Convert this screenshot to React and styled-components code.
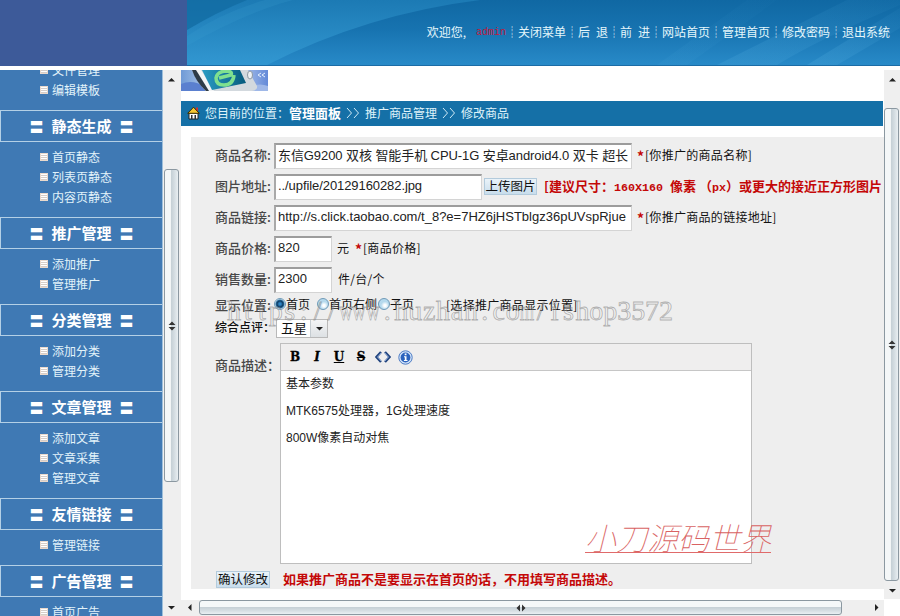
import React, { useState } from 'react';
import styled, { createGlobalStyle, css } from 'styled-components';

const colors = {
	logo: '#3d5a99',
	menu: '#3f79b4',
	menuLine: '#b4d0e6',
	bar: '#1570a7',
	panel: '#eeeeee',
	track: '#efefef',
	red: '#c40808'
};

const cjk = `'Noto Sans CJK SC', sans-serif`;

const GlobalStyle = createGlobalStyle`
	body {
		margin: 0;
		background: #fff;
		overflow: hidden;
		font: 12px/20px ${cjk};
	}
	* {
		box-sizing: border-box;
	}
`;

const Page = styled.div`
	position: relative;
	width: 900px;
	height: 616px;
	overflow: hidden;
	display: flex;
	flex-direction: column;
	gap: 4px;
`;

const Header = styled.header`
	display: flex;
	height: 66px;
	flex: none;
	background: ${colors.logo};
`;

const Logo = styled.div`
	width: 187px;
`;

const Banner = styled.div`
	position: relative;
	flex: 1;
	border-bottom: 1px solid #1b6ca6;
`;

const BannerArt = styled.svg`
	position: absolute;
	inset: 0;
	display: block;
`;

const Nav = styled.nav`
	position: relative;
	display: flex;
	justify-content: flex-end;
	padding: 22px 10px 0 0;
	color: #e4f6fb;
	white-space: pre;
`;

const NavLink = styled.span`
	width: ${({ width }) => width || 48}px;
	display: flex;
	justify-content: space-between;
`;

const NavDivider = styled.span`
	width: 12px;
	text-align: center;
`;

const User = styled.span`
	width: 30px;
	margin: 1px 0 0 10px;
	font-family: 'Liberation Mono', monospace;
	font-size: 10px;
	color: #c2183a;
`;

const Body = styled.div`
	display: flex;
	flex: 1;
	min-height: 0;
`;

const Sidebar = styled.aside`
	width: 163px;
	overflow: hidden;
	background: ${colors.menu};
	border-right: 1px solid #9dbfdb;
	color: #e2f3fa;
`;

const MenuTitle = styled.div`
	display: flex;
	justify-content: center;
	align-items: center;
	gap: 8px;
	height: 32px;
	padding-bottom: 1px;
	border: 1px solid ${colors.menuLine};
	border-right: 0;
	font-size: 15px;
	font-weight: bold;
	color: #fff;
`;

const Geta = styled.span`
	font-size: 14px;
	font-weight: normal;
`;

const MenuList = styled.ul`
	list-style: none;
	margin: 0;
	padding: 5px 0 10px 40px;
	${({ scrolled }) => (scrolled ? 'margin-top: -15px;' : null)};
`;

const MenuItem = styled.li`
	display: flex;
	align-items: center;
	gap: 4px;
	height: 20px;
	line-height: 18px;
	padding-bottom: 1px;
`;

const Bullet = styled.i`
	width: 8px;
	height: 8px;
	margin-top: 1px;
	border: 1px solid #e9d9cd;
	background: repeating-linear-gradient(#fff 0 1px, #d5cdc8 1px 2px);
`;

const Track = styled.div`
	display: flex;
	flex: none;
	flex-direction: ${({ horizontal }) => (horizontal ? 'row' : 'column')};
	${({ horizontal }) => (horizontal ? 'height: 16px' : null)};
	${({ width }) => (width ? `width: ${width}px` : null)};
	${({ length }) => (length ? `height: ${length}px` : null)};
	background: ${colors.track};
`;

const ArrowBox = styled.span`
	display: flex;
	align-items: center;
	justify-content: center;
	flex: none;
	width: 16px;
	height: 18px;
	${({ flat }) => (flat ? 'height: 15px' : null)};
`;

const Thumb = styled.div`
	display: flex;
	align-items: center;
	justify-content: center;
	flex: none;
	border: 1px solid #8b98a1;
	border-radius: 3px;
	${({ horizontal, offset, size }) =>
		horizontal
			? css`
					width: ${size}px;
					height: 15px;
					margin-left: ${offset}px;
					background: linear-gradient(#f5f8f9 0 45%, #c7d1d7 50%, #d6dee3 75%, #e9eff2);
			  `
			: css`
					width: 15px;
					height: ${size}px;
					margin: ${offset}px 0 0 ${horizontal === false ? 0 : 1}px;
					background: linear-gradient(90deg, #f4f7f8 0 42%, #c5d0d6 48%, #d4dde2 72%, #e9eff2);
			  `};
`;

const Spring = styled.span`
	flex: 1;
`;

const Main = styled.main`
	width: 703px;
	display: flex;
	flex-direction: column;
`;

const Picture = styled.svg`
	display: block;
	flex: none;
`;

const Crumbs = styled.div`
	display: flex;
	align-items: center;
	flex: none;
	height: 25px;
	margin: 10px 1px 11px 0;
	padding: 0 0 2px 6px;
	background: ${colors.bar};
	color: #dff3fa;
	white-space: nowrap;

	svg {
		margin-right: 5px;
	}
	b {
		font-size: 13px;
		color: #fff;
	}
`;

const CrumbArrow = styled.span`
	width: 24px;
	display: flex;
	justify-content: center;
	svg {
		margin: 0;
	}
`;

const Panel = styled.form`
	height: 452px;
	flex: none;
	margin: 0 0 11px 10px;
	padding: 3px 0 0 24px;
	background: ${colors.panel};
	color: #111;
`;

const Row = styled.div`
	display: flex;
	align-items: ${({ top }) => (top ? 'flex-start' : 'center')};
	height: ${({ height }) => height || 31}px;
	white-space: nowrap;
`;

const Label = styled.label`
	width: 59px;
	padding-bottom: 2px;
	font-size: ${({ small }) => (small ? 12 : 13)}px;
	font-weight: 500;
	color: ${({ small }) => (small ? '#111' : '#484848')};
`;

const Input = styled.input`
	width: ${({ width }) => width}px;
	height: 26px;
	padding: 0 0 3px 2px;
	border: 1px solid #d4d4d4;
	border-top: 2px solid #9c9c9c;
	border-left: 2px solid #a9a9a9;
	background: #fff;
	outline: none;
	border-radius: 0;
	color: #222;
	font: 13px 'Liberation Sans', ${cjk};
	letter-spacing: ${({ spacing }) => spacing || 0}px;
`;

const Hint = styled.span`
	margin-left: ${({ gap }) => gap || 0}px;
	padding-bottom: 1px;
	letter-spacing: ${({ spacing }) => spacing || 0}px;
`;

const Star = styled.b`
	display: inline-block;
	width: 8px;
	font-size: 14px;
	line-height: 16px;
	vertical-align: -2px;
	color: ${colors.red};
`;

const Warning = styled.b`
	margin-left: ${({ gap }) => gap}px;
	padding-bottom: 1px;
	font-size: 13px;
	color: ${colors.red};
	letter-spacing: ${({ spacing }) => spacing || 0}px;
`;

const Mono = styled.span`
	font: bold 11.7px 'Liberation Mono', monospace;
`;

const Button = styled.button`
	width: ${({ width }) => width}px;
	height: 17px;
	padding: 0;
	border: 1px solid #b3cbdc;
	background: linear-gradient(#eaf3f9, #c8ddec);
	font: ${({ size }) => size}px/14px ${cjk};
	color: #111;
	white-space: nowrap;
`;

const Option = styled.span`
	display: flex;
	align-items: center;
	padding-bottom: 3px;
	width: ${({ width }) => width}px;
`;

const Radio = styled.i`
	flex: none;
	width: 12px;
	height: 12px;
	border: 1px solid #6f9ab8;
	border-radius: 50%;
	background: ${({ checked }) =>
		checked
			? 'radial-gradient(circle, #2f86c4 0 1px, #0d3b62 3px, #2b6f9f 4px, #d6edf8 5px)'
			: 'radial-gradient(circle at 60% 65%, #fff 0 1px, #b5d9ed 4px)'};
`;

const Select = styled.div`
	display: flex;
	width: 52px;
	height: 19px;
	margin-left: 2px;
	padding-left: 4px;
	border: 1px solid #b9b9b9;
	background: #fff;
	font-size: 13px;
	line-height: 15px;
	justify-content: space-between;
`;

const SelectButton = styled.span`
	display: flex;
	align-items: center;
	justify-content: center;
	width: 17px;
	border-left: 1px solid #c5ccd1;
	background: linear-gradient(#f4f5f6, #dde1e4);
`;

const Editor = styled.div`
	width: 472px;
	height: 221px;
	margin: 3px 0 0 6px;
	border: 1px solid #bebebe;
	background: #fff;
`;

const Toolbar = styled.div`
	display: flex;
	align-items: center;
	height: 27px;
	padding-left: 3px;
	border-bottom: 1px solid #c6c6c6;
	background: #efeeee;
`;

const Tool = styled.span`
	width: 22px;
	height: 16px;
	display: flex;
	align-items: center;
	justify-content: center;
	font: 900 12px/16px 'DejaVu Serif', serif;
	color: #000;
	-webkit-text-stroke: 0.3px #000;
	font-style: ${({ italic }) => (italic ? 'italic' : 'normal')};
	text-decoration: ${({ line }) => line || 'none'};
`;

const Paragraph = styled.p`
	margin: 0 0 6.8px;
	padding-left: 5px;
	font: 12px/20px 'Liberation Sans', ${cjk};
	color: #222;
	&:first-of-type {
		margin-top: 3px;
	}
`;

const UrlMark = styled.div`
	position: absolute;
	left: 227px;
	top: 295px;
	display: flex;
	font: 28px/32px 'Liberation Serif', serif;
	color: rgba(255, 255, 255, 0.15);
	-webkit-text-stroke: 0.8px rgba(130, 130, 130, 0.6);
	pointer-events: none;
`;

const UrlLetter = styled.span`
	display: flex;
	justify-content: center;
	width: 13.94px;
	transform: scaleX(${({ wide }) => (wide ? 0.66 : 1)});
`;

const NameMark = styled.div`
	position: absolute;
	left: 585px;
	top: 518px;
	height: 35px;
	border-bottom: 1px solid #e06a6a;
	font: italic 100 31px/37px ${cjk};
	color: #d96363;
	white-space: nowrap;
	pointer-events: none;
`;

const arrowPaths = {
	up: 'M0 5.5 3.5 2 7 5.5Z',
	down: 'M0 2 3.5 5.5 7 2Z',
	left: 'M5.5 0 2 3.5 5.5 7Z',
	right: 'M2 0 5.5 3.5 2 7Z'
};

const Arrow = ({ to }) => (
	<svg width="7" height="7">
		<path d={arrowPaths[to]} fill="#222" />
	</svg>
);

const GripIcon = styled.svg`
	flex: none;
	transform: rotate(${({ $turned }) => ($turned ? 90 : 0)}deg);
`;

const Grip = ({ horizontal }) => (
	<GripIcon width="10" height="10" $turned={horizontal}>
		<path d="M1.5 4 5 0.5 8.5 4Z M1.5 6 5 9.5 8.5 6Z" fill="#333" />
	</GripIcon>
);

const HomeIcon = () => (
	<svg width="13" height="14" viewBox="0 0 13 14">
		<path d="M2 7h9v6H2z" fill="#fff" stroke="#222" />
		<path d="M9 1.5h2V5H9z" fill="#c33" />
		<path d="M.7 7.3 6.5 1.2l5.8 6.1Z" fill="#f5c631" stroke="#3a2c00" />
		<path d="M4 9h1.5v4H4zM7.5 9h1.5v4H7.5z" fill="#333" />
	</svg>
);

const CodeIcon = () => (
	<svg width="16" height="12" fill="none">
		<path d="M6 1 1.5 6 6 11M10 1l4.5 5L10 11" stroke="#23457f" strokeWidth="2.4" />
		<path d="M6 2 2.5 6 6 10M10 2l3.5 4L10 10" stroke="#9db9e6" strokeWidth=".8" />
	</svg>
);

const InfoIcon = () => (
	<svg width="15" height="15">
		<circle cx="7.5" cy="7.5" r="6.7" fill="#d5e5fa" stroke="#4d7cc4" />
		<circle cx="7.5" cy="7.5" r="4.9" fill="#2b63bd" />
		<path d="M6.7 3.6h1.8v1.6H6.7zM6 6.3h2.5v3.8h1v1H5.9v-1h.9V7.2H6z" fill="#fff" />
	</svg>
);

const Chevrons = () => (
	<svg width="14" height="10" fill="none" stroke="#cfeaf6">
		<path d="m1 0 4.5 5L1 10M8 0l4.5 5L8 10" />
	</svg>
);

const PhonePicture = () => (
	<Picture width="87" height="21" viewBox="0 0 87 21">
		<defs>
			<linearGradient id="sky" x1="0" x2="1">
				<stop offset="0" stopColor="#6f9ad6" />
				<stop offset=".5" stopColor="#dce8f6" />
				<stop offset="1" stopColor="#648ad8" />
			</linearGradient>
			<linearGradient id="screen" x1="0" x2="1">
				<stop offset="0" stopColor="#2a9cc4" />
				<stop offset="1" stopColor="#075b7d" />
			</linearGradient>
		</defs>
		<path d="M0 0h87v21H0z" fill="url(#sky)" />
		<path d="M0 14q12-5 24 3v4H0z" fill="#5b80cf" />
		<path d="M71 16q8-3 16 0v5H70z" fill="#9fb8e8" />
		<path d="M11 0h56l9 16q1 4-5 5H25Q17 14 11 0Z" fill="#d3d9de" />
		<path d="M11 0h5l14 21h-5Q15 12 11 0Z" fill="#2f3c48" />
		<path d="M15 0h5l13 21h-5Z" fill="#f3f5f6" />
		<path d="M21 0h38l6 13-34 7Z" fill="url(#screen)" />
		<path
			d="M53 5q-1 10-10 10-8 0-8-7 1-6 9-7 8 0 6 4l-12 3"
			fill="none"
			stroke="#7fe08f"
			strokeWidth="3.5"
		/>
		<ellipse cx="69" cy="5" rx="2.5" ry="4" fill="#eef1f3" stroke="#8d98a2" />
		<path d="m80 3-3 2 3 2m4-4-3 2 3 2" fill="none" stroke="#e5f0ff" />
	</Picture>
);

const BannerBackground = () => (
	<BannerArt width="713" height="65" viewBox="0 0 713 65">
		<defs>
			<linearGradient id="base" x1="0" y1="0" x2="0" y2="1">
				<stop offset="0" stopColor="#1068a3" />
				<stop offset=".45" stopColor="#1773b0" />
				<stop offset="1" stopColor="#288ac8" />
			</linearGradient>
			<linearGradient id="sweep" x1="0" y1="0" x2="0" y2="1">
				<stop offset="0" stopColor="#1c7ab4" />
				<stop offset="1" stopColor="#3297d1" />
			</linearGradient>
			<linearGradient id="ray" x1="1" y1="0" x2="0" y2="1">
				<stop offset="0" stopColor="#4aa6da" stopOpacity=".1" />
				<stop offset="1" stopColor="#4aa6da" stopOpacity=".55" />
			</linearGradient>
		</defs>
		<path d="M0 0h713v65H0z" fill="url(#base)" />
		<path d="M0 0h293Q180 14 80 65H0z" fill="url(#sweep)" />
		<path d="M0 0h60Q30 12 0 30z" fill="#116ba2" opacity=".75" />
		<path d="M0 46Q60 12 106 0H78Q35 12 0 36z" fill="#3d9fd2" opacity=".2" />
		<path d="M470 65 560 0h30L500 65z" fill="url(#ray)" opacity=".2" />
		<path d="M530 65Q610 25 660 0h53v5Q630 40 590 65z" fill="url(#ray)" opacity=".5" />
		<path d="M620 65 713 8v20L650 65z" fill="url(#ray)" opacity=".6" />
	</BannerArt>
);

const links = ['关闭菜单', '后 退', '前 进', '网站首页', '管理首页', '修改密码', '退出系统'];

const menu = [
	{ items: ['文件管理', '编辑模板'] },
	{ title: '静态生成', items: ['首页静态', '列表页静态', '内容页静态'] },
	{ title: '推广管理', items: ['添加推广', '管理推广'] },
	{ title: '分类管理', items: ['添加分类', '管理分类'] },
	{ title: '文章管理', items: ['添加文章', '文章采集', '管理文章'] },
	{ title: '友情链接', items: ['管理链接'] },
	{ title: '广告管理', items: ['首页广告'] }
];

const positions = [
	{ name: '首页', width: 43 },
	{ name: '首页右侧', width: 61 },
	{ name: '子页', width: 68 }
];

const siteUrl = 'https://www.huzhan.com/ishop3572';

const App = () => {
	const [position, setPosition] = useState('首页');

	return (
		<Page>
			<GlobalStyle />
			<Header>
				<Logo />
				<Banner>
					<BannerBackground />
					<Nav>
						<span>欢迎您,</span>
						<User>admin</User>
						{links.map((link, index) => (
							<React.Fragment key={link}>
								<NavDivider>┊</NavDivider>
								<NavLink width={index === 1 || index === 2 ? 30 : 48}>
									{link.includes(' ')
										? link.split(' ').map(part => <span key={part}>{part}</span>)
										: link}
								</NavLink>
							</React.Fragment>
						))}
					</Nav>
				</Banner>
			</Header>
			<Body>
				<Sidebar>
					{menu.map(({ title, items }) => (
						<React.Fragment key={items[0]}>
							{title && (
								<MenuTitle>
									<Geta>〓</Geta>
									<span>{title}</span>
									<Geta>〓</Geta>
								</MenuTitle>
							)}
							<MenuList scrolled={!title}>
								{items.map(item => (
									<MenuItem key={item}>
										<Bullet />
										{item}
									</MenuItem>
								))}
							</MenuList>
						</React.Fragment>
					))}
				</Sidebar>
				<Track width={18}>
					<ArrowBox>
						<Arrow to="up" />
					</ArrowBox>
					<Thumb offset={81} size={313}>
						<Grip />
					</Thumb>
					<Spring />
					<ArrowBox>
						<Arrow to="down" />
					</ArrowBox>
				</Track>
				<Main>
					<PhonePicture />
					<Crumbs>
						<HomeIcon />
						您目前的位置：<b>管理面板</b>
						<CrumbArrow>
							<Chevrons />
						</CrumbArrow>
						推广商品管理
						<CrumbArrow>
							<Chevrons />
						</CrumbArrow>
						修改商品
					</Crumbs>
					<Panel>
						<Row>
							<Label>商品名称:</Label>
							<Input
								width={358}
								spacing={-0.08}
								defaultValue="东信G9200 双核 智能手机 CPU-1G 安卓android4.0 双卡 超长"
							/>
							<Hint gap={5} spacing={0.3}>
								<Star>*</Star>[你推广的商品名称]
							</Hint>
						</Row>
						<Row>
							<Label>图片地址:</Label>
							<Input width={208} spacing={-0.08} defaultValue="../upfile/20129160282.jpg" />
							<Hint gap={2}>
								<Button type="button" width={53} size={12.5}>
									上传图片
								</Button>
							</Hint>
							<Warning gap={7}>
								[建议尺寸：<Mono>160X160 </Mono>像素 （<Mono>px</Mono>）或更大的接近正方形图片
							</Warning>
						</Row>
						<Row>
							<Label>商品链接:</Label>
							<Input
								width={358}
								defaultValue="http://s.click.taobao.com/t_8?e=7HZ6jHSTblgz36pUVspRjue"
							/>
							<Hint gap={5} spacing={0.3}>
								<Star>*</Star>[你推广商品的链接地址]
							</Hint>
						</Row>
						<Row>
							<Label>商品价格:</Label>
							<Input width={58} defaultValue="820" />
							<Hint gap={5}>元</Hint>
							<Hint gap={6} spacing={0.3}>
								<Star>*</Star>[商品价格]
							</Hint>
						</Row>
						<Row>
							<Label>销售数量:</Label>
							<Input width={58} defaultValue="2300" />
							<Hint gap={6} spacing={0.3}>
								件/台/个
							</Hint>
						</Row>
						<Row height={21}>
							<Label>显示位置:</Label>
							{positions.map(({ name, width }) => (
								<Option key={name} width={width} onClick={() => setPosition(name)}>
									<Radio checked={position === name} />
									{name}
								</Option>
							))}
							<Hint spacing={0.3}>[选择推广商品显示位置]</Hint>
						</Row>
						<Row height={24}>
							<Label small>综合点评：</Label>
							<Select>
								五星
								<SelectButton>
									<Arrow to="down" />
								</SelectButton>
							</Select>
						</Row>
						<Row height={231} top>
							<Label style={{ marginTop: 15 }}>商品描述：</Label>
							<Editor>
								<Toolbar>
									<Tool>B</Tool>
									<Tool italic>I</Tool>
									<Tool line="underline">U</Tool>
									<Tool line="line-through">S</Tool>
									<Tool>
										<CodeIcon />
									</Tool>
									<Tool>
										<InfoIcon />
									</Tool>
								</Toolbar>
								<Paragraph>基本参数</Paragraph>
								<Paragraph>MTK6575处理器，1G处理速度</Paragraph>
								<Paragraph>800W像素自动对焦</Paragraph>
							</Editor>
						</Row>
						<Row height={17}>
							<Hint gap={1}>
								<Button type="button" width={54} size={12.5}>
									确认修改
								</Button>
							</Hint>
							<Warning gap={13}>如果推广商品不是要显示在首页的话，不用填写商品描述。</Warning>
						</Row>
					</Panel>
					<Track horizontal>
						<ArrowBox flat>
							<Arrow to="left" />
						</ArrowBox>
						<Thumb horizontal offset={2} size={643}>
							<Grip horizontal />
						</Thumb>
						<Spring />
						<ArrowBox flat>
							<Arrow to="right" />
						</ArrowBox>
					</Track>
				</Main>
				<Track width={16} length={529}>
					<ArrowBox>
						<Arrow to="up" />
					</ArrowBox>
					<Thumb horizontal={false} offset={20} size={473}>
						<Grip />
					</Thumb>
					<Spring />
					<ArrowBox>
						<Arrow to="down" />
					</ArrowBox>
				</Track>
			</Body>
			<UrlMark>
				{siteUrl.split('').map((letter, index) => (
					<UrlLetter key={String(index)} wide={/[wm]/.test(letter)}>
						{letter}
					</UrlLetter>
				))}
			</UrlMark>
			<NameMark>小刀源码世界</NameMark>
		</Page>
	);
};

export default App;
